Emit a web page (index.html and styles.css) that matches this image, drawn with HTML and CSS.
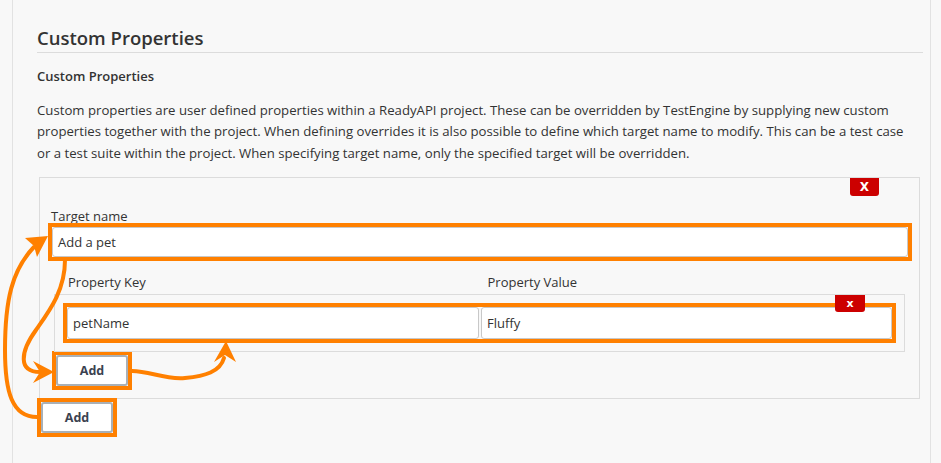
FILE: index.html
```html
<!DOCTYPE html>
<html>
<head>
<meta charset="utf-8">
<link rel="stylesheet" href="styles.css">
</head>
<body>
<div class="page">
  <h2 class="title">Custom Properties</h2>
  <h4 class="subtitle">Custom Properties</h4>
  <p class="desc">Custom properties are user defined properties within a ReadyAPI project. These can be overridden by TestEngine by supplying new custom properties together with the project. When defining overrides it is also possible to define which target name to modify. This can be a test case or a test suite within the project. When specifying target name, only the specified target will be overridden.</p>
  <div class="box">
    <div class="box-top"><span class="del">X</span></div>
    <div class="lbl">Target name</div>
    <div class="hl wide"><div class="field">Add a pet</div></div>
    <div class="props">
      <div class="prop-head"><span class="ph-key">Property Key</span><span class="ph-val">Property Value</span></div>
      <div class="prop-row">
        <div class="pair hl">
          <div class="field tall">petName</div>
          <div class="field tall">Fluffy</div>
        </div>
        <span class="del small">x</span>
      </div>
      <div class="hl inner-add"><button class="btn">Add</button></div>
    </div>
  </div>
  <div class="hl outer-add"><button class="btn">Add</button></div>
</div>
<svg class="arrows" width="941" height="463" viewBox="0 0 941 463">
  <g fill="none" stroke="#ff8000" stroke-width="4" stroke-linecap="round">
    <path d="M65,260 C65,290 50,310 36,330 C20,352 18,372 40,372"/>
    <path d="M37,417 C12,417 5,392 5,350 C5,300 12,270 34,247"/>
    <path d="M132,371 C150,371 165,380 185,378 C205,376 220,372 224,358"/>
  </g>
  <g fill="#ff8000">
    <polygon points="54,372 33,361 40,372 33,383"/>
    <polygon points="48,236 25,238 34,246 37,257"/>
    <polygon points="226,341 214,362 225,355 236,362"/>
  </g>
</svg>
</body>
</html>
```

FILE: styles.css
```css
html, body {
  margin: 0;
  padding: 0;
  background: #f8f8f8;
}
body {
  position: relative;
  font-family: "Open Sans", "Noto Sans", sans-serif;
  color: #333;
  font-size: 13px;
}
.page {
  margin-left: 12px;
  width: 919px;
  min-height: 100vh;
  box-sizing: border-box;
  border-left: 1px solid #e2e2e2;
  border-right: 1px solid #e2e2e2;
  padding: 25px 7px 0 24px;
  display: flex;
  flex-direction: column;
  align-items: flex-start;
}
.title {
  margin: 0;
  align-self: stretch;
  font-size: 18.5px;
  font-weight: 600;
  line-height: 26px;
  padding-bottom: 1px;
  border-bottom: 1px solid #dcdcdc;
  color: #333;
}
.subtitle {
  margin: 14px 0 0;
  font-size: 13px;
  font-weight: 600;
  line-height: 18px;
}
.desc {
  margin: 15px 0 0;
  padding-right: 8px;
  font-size: 13.2px;
  line-height: 21.33px;
}
.box {
  margin: 13px 3px 0 2px;
  align-self: stretch;
  border: 1px solid #dcdcdc;
  padding: 0 11px 12px 12px;
  display: flex;
  flex-direction: column;
  align-items: flex-start;
}
.box-top {
  align-self: stretch;
  display: flex;
  justify-content: flex-end;
  padding-right: 29px;
}
.del {
  display: flex;
  align-items: center;
  justify-content: center;
  width: 29px;
  height: 18px;
  background: #cc0000;
  color: #fff;
  font-weight: 700;
  font-size: 12px;
  font-family: "DejaVu Sans", sans-serif;
  border-radius: 0 0 3px 3px;
}
.lbl {
  margin: 11px 0 0 -1px;
  line-height: 18px;
}
.hl {
  outline: 4px solid #ff8000;
  outline-offset: 0;
  display: flex;
}
.wide {
  align-self: stretch;
  margin-top: 2px;
}
.field {
  flex: 1;
  height: 30px;
  box-sizing: border-box;
  background: #fff;
  border: 1px solid #c8c8c8;
  border-radius: 3px;
  padding-left: 5px;
  display: flex;
  align-items: center;
}
.props {
  align-self: stretch;
  margin: 16px 3px 0 2px;
  display: flex;
  flex-direction: column;
  align-items: flex-start;
}
.prop-head {
  align-self: stretch;
  display: grid;
  grid-template-columns: 1fr 1fr;
  column-gap: 2px;
  padding: 0 13px;
  line-height: 18px;
  margin-bottom: 3px;
}
.ph-key { padding-left: 1px; }
.ph-val { padding-left: 7px; }
.prop-row {
  position: relative;
  align-self: stretch;
  border: 1px solid #dcdcdc;
  padding: 12px;
}
.pair {
  display: grid;
  grid-template-columns: 412fr 411fr;
  column-gap: 2px;
}
.field.tall {
  height: 32px;
}
.del.small {
  position: absolute;
  top: 0;
  right: 39px;
  width: 30px;
  height: 17px;
  font-size: 11px;
  z-index: 2;
}
.btn {
  width: 72px;
  height: 31px;
  box-sizing: border-box;
  background: #fff;
  border: 2px solid #a9b0b7;
  border-radius: 3px;
  font-family: "Open Sans", "Noto Sans", sans-serif;
  font-weight: 700;
  font-size: 12.5px;
  color: #3b4250;
  padding: 0;
}
.inner-add {
  margin: 3px 0 0 2px;
}
.outer-add {
  margin: 3px 0 0 4px;
}
.arrows {
  position: absolute;
  left: 0;
  top: 0;
  pointer-events: none;
}
```
